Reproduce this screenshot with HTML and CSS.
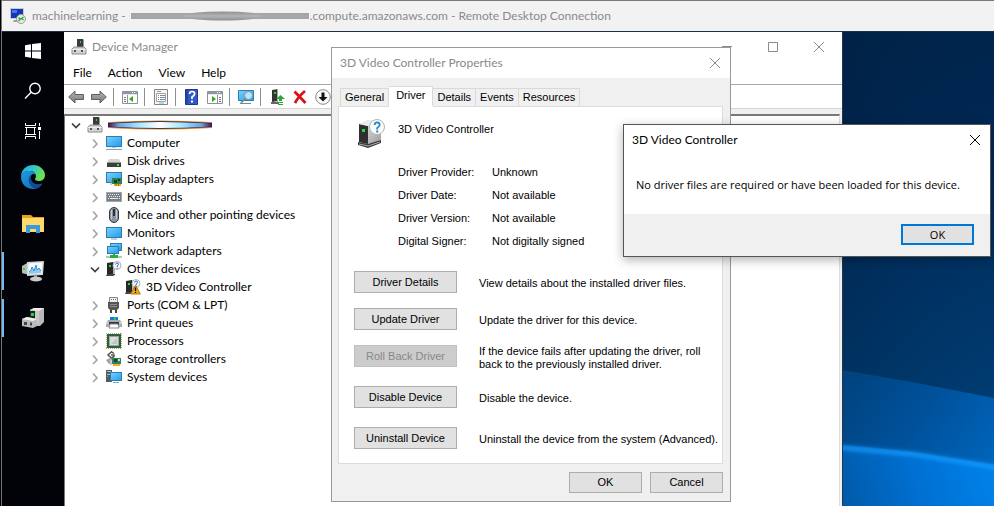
FILE: index.html
```html
<!DOCTYPE html>
<html lang="en">
<head>
<meta charset="utf-8">
<meta name="viewport" content="width=device-width, initial-scale=1">
<title>Remote Desktop Connection</title>
<link rel="stylesheet" href="styles.css">
</head>
<body>
<svg class="defs" aria-hidden="true">
  <defs>
    <linearGradient id="g-screen" x1="0" y1="0" x2="1" y2="1"><stop offset="0" stop-color="#7fd0fb"/><stop offset="1" stop-color="#1e9cf0"/></linearGradient>
    <linearGradient id="g-arrow" x1="0" y1="0" x2="0" y2="1"><stop offset="0" stop-color="#b5b5b5"/><stop offset="1" stop-color="#777"/></linearGradient>
    <linearGradient id="g-side" x1="0" y1="0" x2="1" y2="1"><stop offset="0" stop-color="#f2f2f2"/><stop offset="1" stop-color="#9a9a9a"/></linearGradient>
    <symbol id="i-computer" viewBox="0 0 16 16"><rect x=".5" y="1.500" width="15" height="10" fill="url(#g-screen)" stroke="#2b7fae"/><path d="M6 12h4v1H6z" fill="#9ab"/><path d="M0 14h16v1H0z" fill="#8ba3b3"/><path d="M1 13h14" stroke="#dce6ec"/></symbol>
    <symbol id="i-monitor" viewBox="0 0 16 16"><rect x=".5" y="2.500" width="15" height="10" fill="url(#g-screen)" stroke="#2b7fae"/><path d="M5 14h6" stroke="#8ba3b3"/></symbol>
    <symbol id="i-disk" viewBox="0 0 16 16"><path d="M3 6h10l2 4H1z" fill="#d4d4d4"/><path d="M1 10h14v4H1z" fill="#3c3c3c"/><path d="M1 9.500h14" stroke="#999"/><path d="M11 11h2v2h-2z" fill="#2ee04a"/></symbol>
    <symbol id="i-display" viewBox="0 0 16 16"><rect x=".5" y="1.500" width="15" height="10" fill="url(#g-screen)" stroke="#2b7fae"/><path d="M6 7h10v6H6z" fill="#2e8050"/><path d="M8 9h3v3H8zM12 8h2v2h-2z" fill="#123e2b"/><path d="M5 6v8" stroke="#8aa"/><path d="M8 13h7v2H8z" fill="#f0ad20"/><path d="M10 13v2M12.500 13v2" stroke="#a66c00"/></symbol>
    <symbol id="i-keyboard" viewBox="0 0 16 16"><rect x=".5" y="3.500" width="15" height="9" fill="#777e86" stroke="#a2a7ac"/><path d="M2 5.500h12M3 7.500h11" stroke="#eee" stroke-dasharray="1 1"/><path d="M2 9.500h1M4 9.500h8M13 9.500h1" stroke="#eee"/></symbol>
    <symbol id="i-mouse" viewBox="0 0 16 16"><rect x="3.500" y=".5" width="9" height="15" rx="4.500" fill="#8b959e" stroke="#353b42"/><path d="M5.500 3v9M10.500 3v9" stroke="#c8cdd1"/><rect x="7" y="2" width="2" height="7" fill="#29313a"/></symbol>
    <symbol id="i-network" viewBox="0 0 16 16"><rect x="4.500" y=".5" width="11" height="7" fill="url(#g-screen)" stroke="#2b7fae"/><rect x="1.500" y="3.500" width="11" height="7" fill="url(#g-screen)" stroke="#2b7fae"/><path d="M0 13h16v2H0z" fill="#b8c5b8"/><path d="M7 11h2v1h3v3H4v-3h3z" fill="#2cae3c"/></symbol>
    <symbol id="i-other" viewBox="0 0 16 16"><path d="M1 2l6-1v13l-6 1z" fill="#282828"/><path d="M7 1h2v12l-2 1z" fill="#b5b5b5"/><path d="M0 15l1-2h8v1l-2 1z" fill="#444"/><path d="M3 4h2v2H3z" fill="#1be037"/><circle cx="11" cy="4.500" r="4" fill="#f5f8fa" stroke="#a8b0b6"/><path d="M9.600 3.500q.2-1.400 1.500-1.400 1.500 0 1.400 1.300-.2.800-1.300 1.500V6" fill="none" stroke="#1a6fc0"/><path d="M10.700 6.700h1v1h-1z" fill="#1a6fc0"/></symbol>
    <symbol id="i-warn" viewBox="0 0 16 16"><use href="#i-other"/><path d="M10.500 6.300L15.300 15H5.700z" fill="#f4ab20" stroke="#b87400"/><path d="M9.800 8.500h1.400v3.500H9.800zM9.800 12.700h1.400V14H9.800z" fill="#111"/></symbol>
    <symbol id="i-port" viewBox="0 0 16 16"><path d="M3.500.5h8v5h-8z" fill="#ededed" stroke="#888"/><path d="M5 2.500h6" stroke="#777" stroke-dasharray="1 1"/><path d="M2 5h11v6l-2 2H4l-2-2z" fill="#555"/><path d="M4 7.500h7M4 9.500h7" stroke="#8d8d8d"/><path d="M4 13h2v3H4zM9 13h2v3H9z" fill="#444"/></symbol>
    <symbol id="i-printer" viewBox="0 0 16 16"><path d="M4 2h8v3H4z" fill="#1a79dd"/><path d="M8 2h2v3H8z" fill="#2dc45a"/><path d="M2 5h12l2 3v4H0V8z" fill="#a5adb4"/><path d="M0 8h16" stroke="#eef1f3"/><path d="M3 7h10v3H3z" fill="#333"/><path d="M4 9h8l1 4H3z" fill="#fff" stroke="#888"/></symbol>
    <symbol id="i-cpu" viewBox="0 0 16 16"><path d="M0 .5h16M0 15.500h16M.5 0v16M15.500 0v16" stroke="#c0ac51" stroke-dasharray="1 1"/><rect x="1" y="1" width="14" height="14" fill="#2a6248"/><rect x="3.500" y="3.500" width="9" height="9" fill="#dadfdb" stroke="#9aa79f"/><path d="M5 11l6-6v6z" fill="#c1c8c3"/></symbol>
    <symbol id="i-storage" viewBox="0 0 16 16"><path d="M8 2.500L5.500.8 2 4l3.500 3L8 5.500V4H5" fill="none" stroke="#555" stroke-width="1.500"/><path d="M0 9l4-2 3 2v4H3z" fill="#9da3a3"/><path d="M6 7h9v6H6z" fill="#30815a"/><path d="M8 8h3v3H8z" fill="#193e2d"/><path d="M4 9h2v5H4z" fill="#ccc"/><path d="M7 13h7v2H7z" fill="#f0ad20"/><path d="M12 8h2v2h-2z" fill="#c8e0d0"/></symbol>
    <symbol id="i-system" viewBox="0 0 16 16"><path d="M0 1h6v12H0z" fill="#545b61"/><path d="M1 2.500h4M1 5.500h4" stroke="#b6bcc1"/><path d="M1 7h1v1H1z" fill="#28df48"/><rect x="4.500" y="3.500" width="11" height="8" fill="url(#g-screen)" stroke="#2b7fae"/><path d="M7 13.500h6" stroke="#8ba3b3"/></symbol>
    <symbol id="i-devmgr" viewBox="0 0 16 16"><path d="M6 0h6v9H6z" fill="#3b3b3b"/><path d="M12 0l1 1v8h-1z" fill="#999"/><path d="M9 2h1v2H9z" fill="#20e53a"/><path d="M3 8h10l2 2v5H1v-5z" fill="#d5d5d5" stroke="#8c8c8c"/><path d="M1 10.500h14" stroke="#eee"/><path d="M3 11h2v2H3zM10 11h2v2h-2z" fill="#555"/></symbol>
    <symbol id="i-right" viewBox="0 0 12 12"><path d="M4 2.500L8 7l-4 4" fill="none" stroke="#a3a3a3" stroke-width="1.600"/></symbol>
    <symbol id="i-down" viewBox="0 0 12 12"><path d="M2 4.500l4 4 4-4" fill="none" stroke="#404040" stroke-width="1.700"/></symbol>
    <symbol id="i-close" viewBox="0 0 12 12"><path d="M1 1l10 10M11 1L1 11" fill="none" stroke="currentColor"/></symbol>
  </defs>
</svg>

<div class="session">
  <header class="session-bar">
    <svg class="session-icon" viewBox="0 0 16 16" aria-hidden="true"><rect x=".5" y=".5" width="13" height="10" fill="#1536b8" stroke="#c9ccd2"/><path d="M2 2h5v3H2z" fill="#4a75e8"/><path d="M4 12h5v2H3z" fill="#9a9a9a"/><circle cx="11" cy="11" r="4.500" fill="#e9ece9" stroke="#9a9d9a"/><path d="M8.500 9.500L10.500 11l-2 2M13.500 9l-2 1.500 2 1.500" fill="none" stroke="#1fa02a" stroke-width="1.200"/></svg>
    <h1 class="session-title"><span>machinelearning -</span><svg class="redact" viewBox="0 0 178 10" aria-hidden="true"><defs><linearGradient id="g-bar" x1="0" y1="0" x2="0" y2="1"><stop offset="0" stop-color="#8f8f8f"/><stop offset=".5" stop-color="#b4b4b4"/><stop offset="1" stop-color="#8f8f8f"/></linearGradient></defs><path d="M0 2h178v6H0z" fill="#a6a6a6"/><ellipse cx="92" cy="5" rx="40" ry="4.500" fill="url(#g-bar)"/></svg><span>.compute.amazonaws.com - Remote Desktop Connection</span></h1>
  </header>

  <div class="workspace">
    <nav class="taskbar" aria-label="Taskbar">
      <div class="task-system">
        <button class="task" aria-label="Start"><svg width="18" height="18" viewBox="0 0 18 18"><path d="M1 3.200L7 2.300V8.500H1zM8 2.100L17 1V8.500H8zM1 9.500h6v6.200L1 14.800zM8 9.500h9V17l-9-1.100z" fill="#fff"/></svg></button>
        <button class="task" aria-label="Search"><svg width="18" height="18" viewBox="0 0 18 18"><circle cx="11" cy="6.500" r="5.200" fill="none" stroke="#fff" stroke-width="1.400"/><path d="M7.200 10.300L1 16.500" stroke="#fff" stroke-width="1.400"/></svg></button>
        <button class="task" aria-label="Task view"><svg width="18" height="18" viewBox="0 0 18 18"><path d="M1.500 1v2.500h10V1M2.500 5.500v7M10.500 5.500v7M1 5.500h11M1 12.500h11M1.500 17v-2.500h10V17M15.500 1v3M15.500 9v8" fill="none" stroke="#fff"/><path d="M14 5h3v3h-3z" fill="#fff"/></svg></button>
      </div>
      <div class="task-apps">
        <button class="task" aria-label="Microsoft Edge"><svg width="24" height="24" viewBox="0 0 24 24"><defs><linearGradient id="e1" x1="0" y1="0" x2="1" y2=".35"><stop offset="0" stop-color="#22a9e8"/><stop offset=".5" stop-color="#2fc6cf"/><stop offset="1" stop-color="#72e04c"/></linearGradient><linearGradient id="e2" x1="0" y1="0" x2="1" y2="1"><stop offset="0" stop-color="#1b9de2"/><stop offset="1" stop-color="#1565b8"/></linearGradient></defs><path d="M0 12C0 4 6 0 12 0c7 0 12 5 12 10 0 4-3 6-6 6-3 0-4-1-4-2s1-1 1-3c0-3-3-5-6.500-5C4 6 1 8 0 12z" fill="url(#e1)"/><path d="M0 12c.5-4 4-6 8-6 3.500 0 6.500 2 7 4.500C14 9 12 8.500 11 9.500c-2 1.500-2 4-.5 6.500 2 3.500 6.500 4.500 11 2.500C19.500 22 16 24 12 24 5 24 0 18.500 0 12z" fill="url(#e2)"/><path d="M11 9.500c-5 2-4.500 11 3 14.300 3.500-.6 6-2.600 7.500-5.300-4.500 2-9 1-11-2.500-1.500-2.500-1.500-5 .5-6.500z" fill="#114a91"/></svg></button>
        <button class="task" aria-label="File Explorer"><svg width="22" height="20" viewBox="0 0 22 20"><path d="M0 1h9l2 2h11v15H0z" fill="#e8a317"/><path d="M0 4h22v14H0z" fill="#fcd968"/><path d="M4 19v-8h14v8h-4v-4H8v4z" fill="#3b9adf"/></svg></button>
        <button class="task running" aria-label="Performance Monitor"><svg width="24" height="24" viewBox="0 0 24 24"><path d="M1 7l7-4v13l-7-2z" fill="#b9bdbd"/><path d="M2 9h2v2H2z" fill="#3bcc35"/><path d="M6 3l17-1-1 14L6 17z" fill="#d4d6d6"/><path d="M7.500 4.500l14-1-.8 11-13.200 1z" fill="#f7fbff"/><path d="M8 13l2-2 1-3 2 4 2-6 1 5 2-2 2 3v2l-12 1z" fill="#8ecbf0"/><path d="M8 13l2-2 1-3 2 4 2-6 1 5 2-2 2 3" fill="none" stroke="#3695d4"/><path d="M13 16l3-.5v3h-3z" fill="#999"/><ellipse cx="15" cy="20" rx="6" ry="2.500" fill="#c8caca"/></svg></button>
        <button class="task running" aria-label="Device Manager"><svg width="24" height="24" viewBox="0 0 24 24"><path d="M9 4l4-2h10v14l-4 4H9z" fill="#b7b9b9"/><path d="M9 4l4-2h10l-5 3z" fill="#eee"/><path d="M9 5h5v12H9z" fill="#222"/><path d="M10 7h3v3h-3z" fill="#15de3a"/><path d="M14 5h4v13h-4z" fill="#c8caca"/><path d="M1 13l5-2 10 2v7l-4 2-11-2z" fill="#b9bbbb"/><path d="M1 13l5-2 10 2-4 2z" fill="#f1f1f1"/><path d="M3 16h3v3H3zM9 16.500h2v3H9z" fill="#444"/></svg></button>
      </div>
    </nav>

    <main class="desktop">
      <svg class="wallpaper" viewBox="0 0 930 474" preserveAspectRatio="xMaxYMax slice" aria-hidden="true">
        <defs>
          <linearGradient id="w1" x1="0" y1="0" x2="0" y2="1"><stop offset="0" stop-color="#001a38"/><stop offset=".2" stop-color="#001d42"/><stop offset=".5" stop-color="#002e5c"/><stop offset=".8" stop-color="#003c70"/></linearGradient>
          <linearGradient id="w2" gradientUnits="userSpaceOnUse" x1="778" y1="340" x2="930" y2="440"><stop offset="0" stop-color="#00427c"/><stop offset=".5" stop-color="#00519b"/><stop offset="1" stop-color="#0066bd"/></linearGradient>
          <linearGradient id="w3" gradientUnits="userSpaceOnUse" x1="778" y1="474" x2="930" y2="430"><stop offset="0" stop-color="#005aa8"/><stop offset=".5" stop-color="#0070d2"/><stop offset="1" stop-color="#0082ea"/></linearGradient>
          <linearGradient id="w4" x1="0" y1="0" x2="1" y2="0"><stop offset=".8" stop-color="#00254c" stop-opacity=".5"/><stop offset="1" stop-color="#003f7a" stop-opacity=".3"/></linearGradient>
          <filter id="soft" x="-10%" y="-60%" width="120%" height="220%"><feGaussianBlur stdDeviation="2"/></filter>
        </defs>
        <path d="M0 0h930v474H0z" fill="url(#w1)"/>
        <path d="M0 0h930v474H0z" fill="url(#w4)"/>
        <path d="M0 230L778 338l70 12 82 16v108H0z" fill="url(#w2)"/>
        <path d="M0 340L778 413l70 7 82 13v41H0z" fill="url(#w3)"/>
        <path d="M770 415l78 7 90 14" fill="none" stroke="#159aff" stroke-width="4" filter="url(#soft)"/>
      </svg>

      <section class="window manager" aria-label="Device Manager">
        <div class="manager-title">
          <svg class="icon" aria-hidden="true"><use href="#i-devmgr"/></svg>
          <h2>Device Manager</h2>
          <div class="controls">
            <button aria-label="Minimize"><svg width="12" height="12"><path d="M1 5.500h10" stroke="currentColor"/></svg></button>
            <button aria-label="Maximize"><svg width="12" height="12"><path d="M1.500 1.500h9v9h-9z" fill="none" stroke="currentColor"/></svg></button>
            <button aria-label="Close"><svg width="12" height="12"><use href="#i-close"/></svg></button>
          </div>
        </div>
        <nav class="menu" aria-label="Menu"><button>File</button><button>Action</button><button>View</button><button>Help</button></nav>
        <div class="toolbar" role="toolbar">
          <button aria-label="Back"><svg viewBox="0 0 16 16"><path d="M.7 8L7 2v3.500h8.500v5H7V14z" fill="url(#g-arrow)" stroke="#5e5e5e"/></svg></button>
          <button aria-label="Forward"><svg viewBox="0 0 16 16"><path d="M15.300 8L9 2v3.500H.5v5H9V14z" fill="url(#g-arrow)" stroke="#5e5e5e"/></svg></button>
          <i class="sep"></i>
          <button aria-label="Show console tree"><svg viewBox="0 0 16 16"><path d="M.5 2.500h15v12H.5z" fill="#fff" stroke="#8a929b"/><path d="M1 3h14v3H1z" fill="#8d98a5"/><path d="M1 5.500h14" stroke="#e4e7eb"/><path d="M10 3h1v1h-1zM12 3h1v1h-1z" fill="#fff"/><path d="M5.500 6v8" stroke="#8a929b"/><path d="M2 8.500h2M2 10.500h2M2 12.500h2" stroke="#6d7680"/><path d="M11 7v6l-4-3z" fill="#35a51c"/></svg></button>
          <i class="sep"></i>
          <button aria-label="Properties"><svg viewBox="0 0 16 16"><path d="M1.500.5h13v15h-13z" fill="#f6f6f6" stroke="#858585"/><path d="M3.500 4.500h9v8h-9z" fill="#fff" stroke="#a0a4aa"/><path d="M4 2.500h4" stroke="#999"/><path d="M5 6.500h1M7 6.500h5M5 8.500h1M7 8.500h5M5 10.500h1M7 10.500h5" stroke="#7e8b98"/><path d="M6 14h5" stroke="#62c0d8"/></svg></button>
          <i class="sep"></i>
          <button aria-label="Help"><svg viewBox="0 0 16 16"><path d="M1.500.5h12v15h-12z" fill="#3559c4" stroke="#1d3a91"/><path d="M2 1h2v14H2z" fill="#2546a4"/><path d="M5.500 5q.2-2.500 2.600-2.500 2.700 0 2.500 2.300Q10.400 6.500 8 8v2" fill="none" stroke="#fff" stroke-width="1.700"/><path d="M7 11.500h2v2H7z" fill="#fff"/></svg></button>
          <button aria-label="Action pane"><svg viewBox="0 0 16 16"><path d="M.5 2.500h15v12H.5z" fill="#fff" stroke="#8a929b"/><path d="M1 3h14v3H1z" fill="#8d98a5"/><path d="M1 5.500h14" stroke="#e4e7eb"/><path d="M10 3h1v1h-1zM12 3h1v1h-1z" fill="#fff"/><path d="M10.500 6v8" stroke="#8a929b"/><path d="M12 8.500h2M12 10.500h2M12 12.500h2" stroke="#6d7680"/><path d="M5 7v6l4-3z" fill="#35a51c"/></svg></button>
          <i class="sep"></i>
          <button aria-label="Scan for hardware changes"><svg viewBox="0 0 16 16"><path d="M.5 1.500h15v10H.5z" fill="url(#g-screen)" stroke="#2b7fae"/><path d="M2 14.500h11" stroke="#6c8ca0"/><circle cx="10.500" cy="6.500" r="4" fill="#b9e4fb" stroke="#8596a1"/><path d="M7.500 9.500L3 14" stroke="#788a96" stroke-width="1.700"/></svg></button>
          <i class="sep"></i>
          <button aria-label="Update driver"><svg viewBox="0 0 16 16"><path d="M3 1l6-1v12l-6 1z" fill="#333"/><path d="M8 0h1v13H8z" fill="#aaa"/><path d="M5 3h2v2H5z" fill="#17dc38"/><path d="M2 13h8v2H2z" fill="#666"/><path d="M11.500 6l4.500 4h-3v2h-3v-2H7z" fill="#2aa832"/><path d="M9 13.500h5M9 15.500h5" stroke="#2aa832"/></svg></button>
          <button aria-label="Uninstall device"><svg viewBox="0 0 16 16"><path d="M2.500 2.500Q8 8 13.500 14M13 2Q6 8 3 14" fill="none" stroke="#d7141a" stroke-width="2.800"/></svg></button>
          <button aria-label="Disable device"><svg viewBox="0 0 16 16"><circle cx="8" cy="8" r="7.300" fill="#fafafa" stroke="#8a8a8a"/><path d="M6.500 3.500h3V8H12.500L8 12.500 3.500 8h3z" fill="#111"/></svg></button>
        </div>
        <div class="tree-pane">
          <ul class="tree">
            <li><div class="node root"><svg class="chev" aria-hidden="true"><use href="#i-down"/></svg><svg class="icon" aria-hidden="true"><use href="#i-devmgr"/></svg><svg class="tree-redact" viewBox="0 0 104 10" aria-hidden="true"><defs><linearGradient id="rb" x1="0" y1="0" x2="1" y2="0"><stop offset="0" stop-color="#35107a"/><stop offset=".1" stop-color="#6d9fd8"/><stop offset=".3" stop-color="#b2e6ff"/><stop offset=".5" stop-color="#fff"/><stop offset=".7" stop-color="#b2e6ff"/><stop offset=".9" stop-color="#6d9fd8"/><stop offset="1" stop-color="#35107a"/></linearGradient></defs><path d="M0 2Q52-1 104 2v6Q52 11 0 8z" fill="#e38a2d"/><path d="M0 3Q52-.5 104 3v4Q52 10.500 0 7z" fill="#06204a"/><path d="M0 3.500Q52 .5 104 3.500v3Q52 9.500 0 6.500z" fill="url(#rb)"/></svg></div>
              <ul>
                <li><div class="node"><svg class="chev"><use href="#i-right"/></svg><svg class="icon"><use href="#i-computer"/></svg>Computer</div></li>
                <li><div class="node"><svg class="chev"><use href="#i-right"/></svg><svg class="icon"><use href="#i-disk"/></svg>Disk drives</div></li>
                <li><div class="node"><svg class="chev"><use href="#i-right"/></svg><svg class="icon"><use href="#i-display"/></svg>Display adapters</div></li>
                <li><div class="node"><svg class="chev"><use href="#i-right"/></svg><svg class="icon"><use href="#i-keyboard"/></svg>Keyboards</div></li>
                <li><div class="node"><svg class="chev"><use href="#i-right"/></svg><svg class="icon"><use href="#i-mouse"/></svg>Mice and other pointing devices</div></li>
                <li><div class="node"><svg class="chev"><use href="#i-right"/></svg><svg class="icon"><use href="#i-monitor"/></svg>Monitors</div></li>
                <li><div class="node"><svg class="chev"><use href="#i-right"/></svg><svg class="icon"><use href="#i-network"/></svg>Network adapters</div></li>
                <li><div class="node"><svg class="chev"><use href="#i-down"/></svg><svg class="icon"><use href="#i-other"/></svg>Other devices</div>
                  <ul><li><div class="node leaf"><svg class="icon"><use href="#i-warn"/></svg>3D Video Controller</div></li></ul>
                </li>
                <li><div class="node"><svg class="chev"><use href="#i-right"/></svg><svg class="icon"><use href="#i-port"/></svg>Ports (COM &amp; LPT)</div></li>
                <li><div class="node"><svg class="chev"><use href="#i-right"/></svg><svg class="icon"><use href="#i-printer"/></svg>Print queues</div></li>
                <li><div class="node"><svg class="chev"><use href="#i-right"/></svg><svg class="icon"><use href="#i-cpu"/></svg>Processors</div></li>
                <li><div class="node"><svg class="chev"><use href="#i-right"/></svg><svg class="icon"><use href="#i-storage"/></svg>Storage controllers</div></li>
                <li><div class="node"><svg class="chev"><use href="#i-right"/></svg><svg class="icon"><use href="#i-system"/></svg>System devices</div></li>
              </ul>
            </li>
          </ul>
        </div>
      </section>

      <section class="window properties" role="dialog" aria-label="3D Video Controller Properties">
        <div class="dialog-title inactive"><h2>3D Video Controller Properties</h2><button aria-label="Close"><svg width="12" height="12"><use href="#i-close"/></svg></button></div>
        <div class="properties-body">
          <div class="tabs" role="tablist">
            <button class="tab" role="tab">General</button><button class="tab selected" role="tab" aria-selected="true">Driver</button><button class="tab" role="tab">Details</button><button class="tab" role="tab">Events</button><button class="tab" role="tab">Resources</button>
          </div>
          <div class="panel" role="tabpanel">
            <div class="device">
              <svg width="28" height="30" viewBox="0 0 28 30" aria-hidden="true"><path d="M1 5l9-4h13v20l-9 5-13-2z" fill="url(#g-side)"/><path d="M1 5l9 2v18l-9-2z" fill="#303030"/><path d="M1 5l10-4h12L10 7z" fill="#ececec"/><path d="M4 10h3v3H4z" fill="#17e23c"/><path d="M0 23l10 2 13-4v3l-13 5-10-3z" fill="#3a3a3a"/><path d="M1 25l9 2 12-4" stroke="#aaa" fill="none"/><circle cx="19" cy="8" r="7.500" fill="#f8fafb" stroke="#b4b4b4"/><path d="M16.500 6q.2-2.700 2.700-2.700T21.700 6q-.2 1.500-2.500 3v1.500" fill="none" stroke="#2584c6" stroke-width="1.800"/><path d="M18.200 11.500h2v2h-2z" fill="#2584c6"/></svg>
              <span>3D Video Controller</span>
            </div>
            <dl class="facts">
              <dt>Driver Provider:</dt><dd>Unknown</dd>
              <dt>Driver Date:</dt><dd>Not available</dd>
              <dt>Driver Version:</dt><dd>Not available</dd>
              <dt>Digital Signer:</dt><dd>Not digitally signed</dd>
            </dl>
            <div class="actions">
              <div class="action"><button class="push">Driver Details</button><p>View details about the installed driver files.</p></div>
              <div class="action"><button class="push">Update Driver</button><p>Update the driver for this device.</p></div>
              <div class="action"><button class="push" disabled>Roll Back Driver</button><p>If the device fails after updating the driver, roll<br>back to the previously installed driver.</p></div>
            </div>
            <div class="actions spaced">
              <div class="action"><button class="push">Disable Device</button><p>Disable the device.</p></div>
              <div class="action"><button class="push">Uninstall Device</button><p>Uninstall the device from the system (Advanced).</p></div>
            </div>
          </div>
          <div class="dialog-buttons"><button class="push small">OK</button><button class="push small">Cancel</button></div>
        </div>
      </section>

      <section class="window message" role="alertdialog" aria-label="3D Video Controller">
        <div class="dialog-title"><h2>3D Video Controller</h2><button aria-label="Close"><svg width="12" height="12"><use href="#i-close"/></svg></button></div>
        <p class="message-text">No driver files are required or have been loaded for this device.</p>
        <div class="message-footer"><button class="push small default">OK</button></div>
      </section>
    </main>
  </div>
</div>
</body>
</html>
```
FILE: styles.css
```css
* { box-sizing: border-box; }

:root {
  --ui: Lato, "Open Sans", sans-serif;
  --message: "Open Sans", "Noto Sans", sans-serif;
  --classic: "Liberation Sans", Arial, sans-serif;
}

body {
  margin: 0;
  background: #000;
  color: #000;
  font: 12px/18px var(--ui);
}

h1, h2, p, ul, dl, dd { margin: 0; padding: 0; }
h1, h2 { font-size: 12px; font-weight: 400; }
ul { list-style: none; }
svg { display: block; flex: none; }
button { margin: 0; padding: 0; border: 0; background: none; color: inherit; font: inherit; }
.defs { position: absolute; width: 0; height: 0; }

.session {
  display: flex;
  flex-direction: column;
  height: 100vh;
  margin-left: 1px;
  border-top: 1px solid #777;
  border-left: 1px solid #777;
}

.session-bar {
  display: flex;
  align-items: center;
  gap: 6px;
  height: 31px;
  padding-left: 8px;
  border-bottom: 1px solid #1f2f45;
  background: #f2f2f2;
  color: #8a8a8a;
}
.session-icon { width: 16px; height: 16px; }
.session-title { display: flex; align-items: center; white-space: nowrap; }
.redact { width: 178px; height: 10px; margin: 0 1px 0 5px; }

.workspace { display: flex; flex: 1; min-height: 0; }

.taskbar { flex: none; width: 62px; background: #020308; }
.task-system { display: flex; flex-direction: column; gap: 2px; }
.task-apps { display: flex; flex-direction: column; gap: 1px; margin-top: 4px; }
.task { display: flex; align-items: center; justify-content: center; width: 100%; height: 38px; }
.task-apps .task { height: 46px; border: 4px solid transparent; border-width: 4px 0; }
.task-apps .running { background: linear-gradient(#76b9ed, #76b9ed) left / 2px 100% no-repeat padding-box; }

.desktop { position: relative; flex: 1; overflow: hidden; background: #002a54; }
.wallpaper { position: absolute; inset: 0; width: 100%; height: 100%; }

.window { position: absolute; display: flex; flex-direction: column; background: #fff; }
.manager { top: 0; bottom: 0; left: 0; width: 779px; border-right: 1px solid #26364a; }
.properties { top: 15px; left: 267px; width: 400px; border: 1px solid #999; font: 11px/13px var(--classic); }
.message { top: 92px; left: 559px; width: 368px; border: 1px solid #555; box-shadow: 0 3px 10px rgba(0, 0, 0, .3); }

.icon { width: 16px; height: 16px; }
.manager-title { display: flex; align-items: center; height: 30px; padding-left: 7px; gap: 5px; color: #8a8a8a; }
.controls { display: flex; margin-left: auto; }
.controls button { display: flex; align-items: center; justify-content: center; width: 46px; height: 30px; }

.menu { display: flex; gap: 16px; height: 22px; padding-left: 9px; align-items: center; }

.toolbar { display: flex; align-items: center; gap: 7px; height: 25px; padding-left: 4px; border-top: 1px solid #aaa; border-bottom: 1px solid #d5d5d5; }
.toolbar svg { width: 16px; height: 16px; }
.sep { width: 1px; height: 18px; margin: 0 1px 0 -1px; background: #8f8f8f; }

.tree-pane { flex: 1; border-top: 5px solid #f0f0f0; border-right: 2px solid #f0f0f0; }
.tree { height: 100%; border-top: 2px solid #777; border-left: 1px solid #777; border-right: 1px solid #ddd; }
.node { display: flex; align-items: center; gap: 5px; height: 18px; padding-left: 24px; white-space: nowrap; }
.root { padding-left: 5px; }
.leaf { padding-left: 60px; }
.chev { width: 12px; height: 12px; }
.tree-redact { width: 104px; height: 10px; }

.dialog-title { display: flex; align-items: center; justify-content: space-between; height: 30px; padding: 0 9px 0 8px; font: 12px/18px var(--ui); }
.inactive { color: #8a8a8a; }

.properties-body { padding: 8px 7px 8px 6px; background: #f0f0f0; }
.tabs { display: flex; align-items: flex-end; padding-left: 2px; height: 20px; }
.tab { height: 18px; padding: 0 4px; border: 1px solid #d9d9d9; border-bottom: 0; }
.tab + .tab { border-left: 0; }
.selected { height: 20px; padding: 0 7px 2px; background: #fff; box-shadow: 0 1px #fff; }

.panel { padding: 12px 12px 12px 15px; border: 1px solid #dcdcdc; background: #fff; }
.device { display: flex; gap: 12px; padding-left: 4px; }
.device span { padding-top: 4px; }
.facts { display: grid; grid-template-columns: 94px 1fr; grid-auto-rows: 23px; align-items: center; margin: 12px 0 18px 44px; }
.actions { display: grid; gap: 13px; }
.spaced { gap: 17px; margin-top: 15px; }
.action { display: grid; grid-template-columns: 103px 1fr; column-gap: 22px; min-height: 24px; }
.action p { align-self: center; white-space: nowrap; }

.push { height: 22px; border: 1px solid #adadad; background: #e1e1e1; }
.push:disabled { border-color: #bfbfbf; background: #ccc; color: #888; }
.small { width: 73px; height: 21px; }
.default { border: 2px solid #0078d7; font: 11px/13px var(--message); }
.dialog-buttons { display: flex; justify-content: flex-end; gap: 8px; margin-top: 8px; }

.message-text { padding: 21px 12px 20px; font: 11px/18px var(--message); white-space: nowrap; }
.message-footer { display: flex; justify-content: flex-end; padding: 10px 16px 11px; background: #f0f0f0; }
```
